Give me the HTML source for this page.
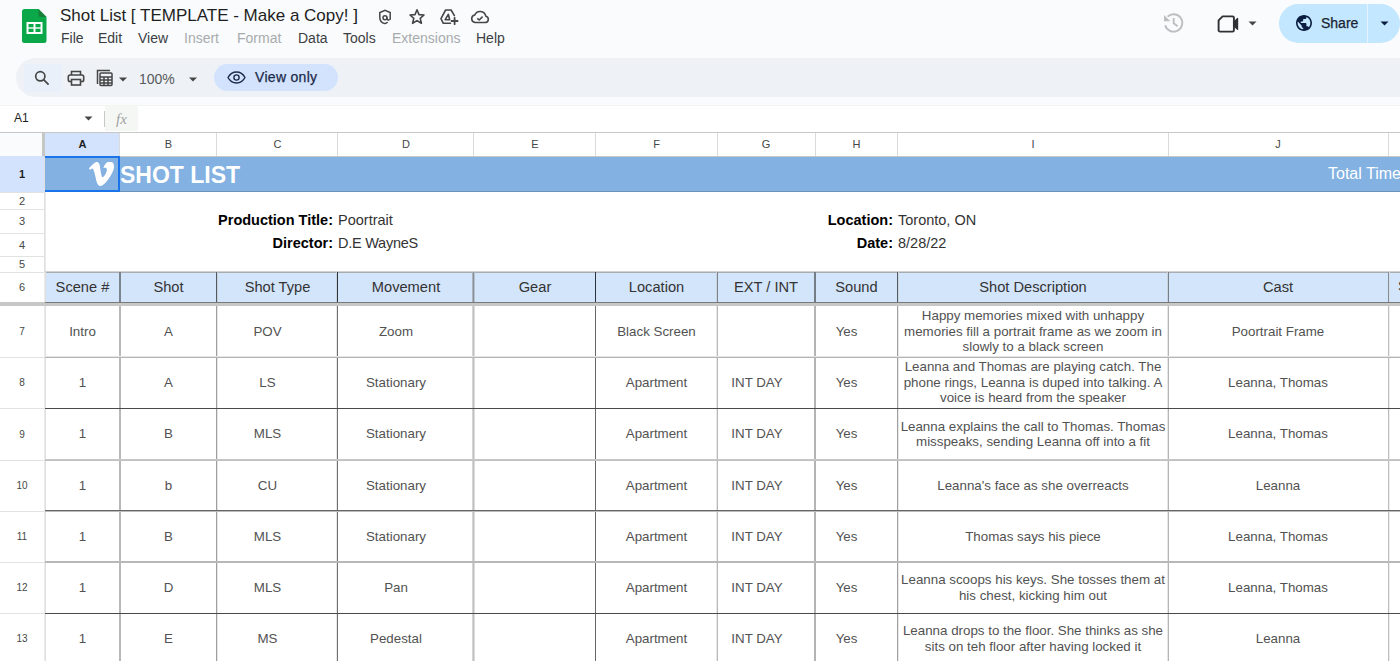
<!DOCTYPE html>
<html><head><meta charset="utf-8">
<style>
*{margin:0;padding:0;box-sizing:border-box}
html,body{width:1400px;height:661px;overflow:hidden;background:#f9fbfd;font-family:"Liberation Sans",sans-serif;position:relative}
.a{position:absolute}
.t{position:absolute;white-space:nowrap;line-height:0}
.menu span{position:absolute;white-space:nowrap;line-height:0;font-size:14px;color:#3c4043}
.menu span.dis{color:#a8abae}
.hl{position:absolute;height:1px}
.vl{position:absolute;width:1px}
.c{position:absolute;display:flex;align-items:center;justify-content:center;text-align:center;font-size:13.33px;color:#525252;line-height:15.5px;white-space:nowrap}
.ch{position:absolute;top:132px;height:24px;display:flex;align-items:center;justify-content:center;font-size:11px;color:#444746}
.rh{position:absolute;left:0;width:44px;display:flex;align-items:center;justify-content:center;font-size:11px;color:#444746}
</style></head><body>

<!-- ===== Title bar ===== -->
<svg class="a" style="left:21.5px;top:9px" width="25" height="34" viewBox="0 0 25 34">
  <path d="M2.5 0H16.5L24.5 8V31.5A2.5 2.5 0 0 1 22 34H2.5A2.5 2.5 0 0 1 0 31.5V2.5A2.5 2.5 0 0 1 2.5 0Z" fill="#0ba84a"/>
  <path d="M16.5 0L24.5 8H18.5A2 2 0 0 1 16.5 6Z" fill="#188038"/>
  <rect x="4.5" y="13" width="16" height="12" fill="#fff"/>
  <rect x="6.5" y="15" width="5" height="3.3" fill="#0ba84a"/>
  <rect x="13.5" y="15" width="5" height="3.3" fill="#0ba84a"/>
  <rect x="6.5" y="19.7" width="5" height="3.3" fill="#0ba84a"/>
  <rect x="13.5" y="19.7" width="5" height="3.3" fill="#0ba84a"/>
</svg>
<div class="t" style="left:60px;top:16px;font-size:17px;color:#1f1f1f">Shot List [ TEMPLATE - Make a Copy! ]</div>

<!-- title icons -->
<svg class="a" style="left:378px;top:9px" width="14" height="16" viewBox="0 0 14 16" fill="none" stroke="#444746" stroke-width="1.5" stroke-linecap="round">
  <path d="M12.2 10.2V3.6L7 1.3L1.8 3.6V8.4C1.8 11.3 4 13.8 7 14.6C7.8 14.4 8.6 14 9.2 13.5"/>
  <circle cx="7" cy="8.8" r="2"/><path d="M9 8.8V9.8C9 10.9 10.3 11.4 11.2 10.7"/>
</svg>
<svg class="a" style="left:408px;top:8px" width="18" height="17" viewBox="0 0 18 17" fill="none" stroke="#444746" stroke-width="1.6" stroke-linejoin="round">
  <path d="M9 1.8L11 6.6L16 7L12.2 10.3L13.4 15.3L9 12.6L4.6 15.3L5.8 10.3L2 7L7 6.6Z"/>
</svg>
<svg class="a" style="left:439px;top:8px" width="20" height="18" viewBox="0 0 20 18" fill="none" stroke="#444746" stroke-width="1.6" stroke-linejoin="round" stroke-linecap="round">
  <path d="M15.4 7.6L12.1 2H6.6L2 10.6L4.3 15.3H11.5"/>
  <path d="M9.3 6.3L6.2 11.7H10.7Z"/>
  <path d="M15.6 9.8V16.2M12.5 13H18.6" stroke-width="1.8"/>
</svg>
<svg class="a" style="left:470px;top:9px" width="20" height="16" viewBox="0 0 20 16" fill="none" stroke="#444746" stroke-width="1.6" stroke-linejoin="round">
  <path d="M5 13.5H15.5A3.2 3.2 0 0 0 15.8 7.2A5.8 5.8 0 0 0 4.8 6A3.8 3.8 0 0 0 5 13.5Z"/>
  <path d="M7.3 9.3L9.2 11L12.6 7.6"/>
</svg>

<div class="menu">
  <span style="left:61px;top:38px">File</span>
  <span style="left:98px;top:38px">Edit</span>
  <span style="left:138px;top:38px">View</span>
  <span class="dis" style="left:184px;top:38px">Insert</span>
  <span class="dis" style="left:237px;top:38px">Format</span>
  <span style="left:298px;top:38px">Data</span>
  <span style="left:343px;top:38px">Tools</span>
  <span class="dis" style="left:392px;top:38px">Extensions</span>
  <span style="left:476px;top:38px">Help</span>
</div>

<!-- right icons -->
<svg class="a" style="left:1162px;top:12px" width="23" height="22" viewBox="0 0 23 22" fill="none" stroke="#bcbec0" stroke-width="1.9">
  <path d="M3.2 13.2A8.7 8.7 0 1 0 5.6 4.6"/><path d="M2 3V9.3H8.3Z" fill="#bcbec0" stroke="none"/><path d="M11.7 6V11.3L15.6 14.3"/>
</svg>
<svg class="a" style="left:1217px;top:14px" width="23" height="19" viewBox="0 0 23 19" fill="none" stroke="#2f3133" stroke-width="1.9" stroke-linejoin="round">
  <path d="M5.6 2.4H15.5A1.4 1.4 0 0 1 16.9 3.8V16.2A1.4 1.4 0 0 1 15.5 17.6H3A1.4 1.4 0 0 1 1.6 16.2V6.4Z"/>
  <path d="M16.9 8L20.6 4.5V15.4L16.9 12Z" fill="#2f3133" stroke-width="1.2"/>
</svg>
<svg class="a" style="left:1248px;top:21px" width="9" height="5" viewBox="0 0 9 5"><path d="M0.5 0.5H8.5L4.5 4.5Z" fill="#444746"/></svg>

<div class="a" style="left:1279px;top:4px;width:121px;height:39px;border-radius:20px;background:#c2e7ff"></div>
<div class="a" style="left:1367px;top:4px;width:1px;height:39px;background:#e4f3ff"></div>
<svg class="a" style="left:1296px;top:15px" width="16" height="16" viewBox="2 2 20 20">
  <path fill="#0b1d40" d="M12 2C6.48 2 2 6.48 2 12s4.48 10 10 10 10-4.48 10-10S17.52 2 12 2zm-1 17.930c-3.95-.49-7-3.850-7-7.930 0-.62.08-1.210.21-1.790L9 15v1c0 1.100.9 2 2 2v1.930zm6.900-2.540c-.26-.81-1-1.390-1.900-1.390h-1v-3c0-.55-.45-1-1-1H8v-2h2c.55 0 1-.45 1-1V7h2c1.100 0 2-.9 2-2v-.41c2.930 1.190 5 4.060 5 7.410 0 2.080-.8 3.970-2.100 5.390z"/>
</svg>
<div class="t" style="left:1321px;top:23px;font-size:14px;-webkit-text-stroke:0.25px #1b2333;color:#1b2333">Share</div>
<svg class="a" style="left:1380px;top:21px" width="9" height="5" viewBox="0 0 9 5"><path d="M0.5 0.5H8.5L4.5 4.5Z" fill="#0b1d40"/></svg>

<!-- ===== Toolbar ===== -->
<div class="a" style="left:16px;top:58px;width:1420px;height:39px;border-radius:20px;background:#eef1f6"></div>
<div class="a" style="left:24px;top:64px;width:38px;height:28px;background:#e9f0fa"></div>
<svg class="a" style="left:34px;top:70px" width="16" height="16" viewBox="0 0 16 16" fill="none" stroke="#444746" stroke-width="1.7">
  <circle cx="6.3" cy="6.3" r="4.6"/><path d="M9.6 9.6L14.6 14.6"/>
</svg>
<svg class="a" style="left:67px;top:70px" width="18" height="16" viewBox="0 0 18 16" fill="none" stroke="#444746" stroke-width="1.6">
  <path d="M4.5 5V1.5H13.5V5"/><rect x="1.3" y="5" width="15.4" height="6.5" rx="1.8"/><rect x="4.5" y="9.5" width="9" height="5.5" fill="#eef1f6"/>
</svg>
<svg class="a" style="left:96px;top:69px" width="18" height="18" viewBox="0 0 18 18" fill="none" stroke="#444746" stroke-width="1.5">
  <path d="M1.5 15V1.5H14"/><rect x="4" y="4" width="12" height="12.5" rx="1"/>
  <path d="M4 8H16M4 11H16M4 14H16M8 8V16.5M12 8V16.5"/>
</svg>
<svg class="a" style="left:119px;top:77px" width="8" height="5" viewBox="0 0 8 5"><path d="M0 0.5H8L4 4.5Z" fill="#444746"/></svg>
<div class="t" style="left:139px;top:79px;font-size:14px;color:#575a5c">100%</div>
<svg class="a" style="left:189px;top:77px" width="8" height="5" viewBox="0 0 8 5"><path d="M0 0.5H8L4 4.5Z" fill="#444746"/></svg>
<div class="a" style="left:214px;top:64px;width:124px;height:27px;border-radius:14px;background:#d3e3fd"></div>
<svg class="a" style="left:227px;top:71px" width="19" height="13" viewBox="0 0 19 13" fill="none" stroke="#1c2a4a" stroke-width="1.4">
  <path d="M1 6.5C3 2.8 6 1 9.5 1S16 2.8 18 6.5C16 10.2 13 12 9.5 12S3 10.2 1 6.5Z"/><circle cx="9.5" cy="6.5" r="2.6"/>
</svg>
<div class="t" style="left:255px;top:77px;font-size:14px;-webkit-text-stroke:0.25px #1c2a4a;letter-spacing:0.3px;color:#1c2a4a">View only</div>

<!-- ===== Formula bar ===== -->
<div class="a" style="left:0;top:105px;width:1400px;height:1px;background:#f2f4f2"></div><div class="a" style="left:0;top:106px;width:1400px;height:26px;background:#fff"></div>
<div class="t" style="left:14px;top:118px;font-size:12px;color:#1f1f1f">A1</div>
<svg class="a" style="left:84px;top:116px" width="9" height="5" viewBox="0 0 9 5"><path d="M0.5 0.5H8.5L4.5 4.5Z" fill="#444746"/></svg>
<div class="a" style="left:104px;top:111px;width:1px;height:16px;background:#c7c7c7"></div>
<div class="a" style="left:105px;top:106px;width:33px;height:25px;background:#f5f7f5"></div>
<div class="t" style="left:116px;top:119px;font-size:15px;font-style:italic;color:#a0a3a3;font-family:'Liberation Serif',serif">fx</div>

<!-- ===== Grid ===== -->
<div class="a" style="left:0;top:132px;width:1400px;height:529px;background:#fff"></div>
<div class="a" style="left:0;top:132px;width:1400px;height:1px;background:#c7c7c7"></div>
<div class="a" style="left:0;top:133px;width:42px;height:23px;background:#f9fbfd"></div>
<div class="a" style="left:42px;top:133px;width:3px;height:23px;background:#c4c7c5"></div>
<div class="a" style="left:44px;top:156px;width:1px;height:505px;background:#dfe1df"></div><div class="a" style="left:45px;top:192px;width:1px;height:80px;background:#e8eae8"></div>
<div class="a" style="left:45px;top:133px;width:75px;height:23px;background:#d3e3fd"></div>
<div class="ch" style="left:45px;width:75px;font-weight:bold;color:#1f1f1f">A</div>
<div class="ch" style="left:120px;width:97px;">B</div>
<div class="a" style="left:119px;top:133px;width:1px;height:23px;background:#dadcda"></div>
<div class="ch" style="left:217px;width:121px;">C</div>
<div class="a" style="left:216px;top:133px;width:1px;height:23px;background:#dadcda"></div>
<div class="ch" style="left:338px;width:136px;">D</div>
<div class="a" style="left:337px;top:133px;width:1px;height:23px;background:#dadcda"></div>
<div class="ch" style="left:474px;width:122px;">E</div>
<div class="a" style="left:473px;top:133px;width:1px;height:23px;background:#dadcda"></div>
<div class="ch" style="left:596px;width:121px;">F</div>
<div class="a" style="left:595px;top:133px;width:1px;height:23px;background:#dadcda"></div>
<div class="ch" style="left:717px;width:98px;">G</div>
<div class="a" style="left:717px;top:133px;width:1px;height:23px;background:#dadcda"></div>
<div class="ch" style="left:815px;width:83px;">H</div>
<div class="a" style="left:815px;top:133px;width:1px;height:23px;background:#dadcda"></div>
<div class="ch" style="left:898px;width:270px;">I</div>
<div class="a" style="left:897px;top:133px;width:1px;height:23px;background:#dadcda"></div>
<div class="ch" style="left:1168px;width:220px;">J</div>
<div class="a" style="left:1168px;top:133px;width:1px;height:23px;background:#dadcda"></div>
<div class="ch" style="left:1388px;width:112px;">K</div>
<div class="a" style="left:1388px;top:133px;width:1px;height:23px;background:#dadcda"></div>
<div class="a" style="left:0;top:156px;width:1400px;height:1px;background:#c7c7c7"></div>
<div class="rh" style="top:156px;height:36px;font-weight:bold;color:#1f1f1f;background:#d3e3fd">1</div>
<div class="rh" style="top:192px;height:17px;">2</div>
<div class="a" style="left:0;top:192px;width:44px;height:1px;background:#e1e3e1"></div>
<div class="rh" style="top:209px;height:24px;">3</div>
<div class="a" style="left:0;top:209px;width:44px;height:1px;background:#e1e3e1"></div>
<div class="rh" style="top:233px;height:23px;">4</div>
<div class="a" style="left:0;top:233px;width:44px;height:1px;background:#e1e3e1"></div>
<div class="rh" style="top:256px;height:16px;">5</div>
<div class="a" style="left:0;top:256px;width:44px;height:1px;background:#e1e3e1"></div>
<div class="rh" style="top:272px;height:30px;">6</div>
<div class="a" style="left:0;top:272px;width:44px;height:1px;background:#e1e3e1"></div>
<div class="rh" style="top:306px;height:51px;font-size:10px">7</div>
<div class="rh" style="top:357px;height:51px;font-size:10px">8</div>
<div class="a" style="left:0;top:357px;width:44px;height:1px;background:#e1e3e1"></div>
<div class="rh" style="top:408px;height:52px;font-size:10px">9</div>
<div class="a" style="left:0;top:408px;width:44px;height:1px;background:#e1e3e1"></div>
<div class="rh" style="top:460px;height:51px;font-size:10px">10</div>
<div class="a" style="left:0;top:460px;width:44px;height:1px;background:#e1e3e1"></div>
<div class="rh" style="top:511px;height:51px;font-size:10px">11</div>
<div class="a" style="left:0;top:511px;width:44px;height:1px;background:#e1e3e1"></div>
<div class="rh" style="top:562px;height:51px;font-size:10px">12</div>
<div class="a" style="left:0;top:562px;width:44px;height:1px;background:#e1e3e1"></div>
<div class="rh" style="top:613px;height:51px;font-size:10px">13</div>
<div class="a" style="left:0;top:613px;width:44px;height:1px;background:#e1e3e1"></div>
<div class="a" style="left:0;top:302px;width:1400px;height:4px;background:#c6c8c6"></div>
<div class="a" style="left:45px;top:157px;width:1355px;height:35px;background:#82b1e2"></div>
<div class="a" style="left:45px;top:191px;width:1355px;height:1px;background:#6f93b8"></div>
<div class="a" style="left:45px;top:156px;width:75px;height:36px;border:2px solid #1a73e8;border-left:none"></div>
<svg class="a" style="left:89px;top:162px" width="25" height="24" viewBox="0 1.9 24 20.5" preserveAspectRatio="none"><path fill="#fff" d="M23.9765 6.4168c-.105 2.338-1.739 5.5429-4.894 9.6088-3.2679 4.247-6.0258 6.3699-8.2898 6.3699-1.409 0-2.578-1.294-3.553-3.881l-1.9179-7.1138c-.719-2.584-1.488-3.878-2.312-3.878-.179 0-.806.378-1.8809 1.132L0 7.2271c1.185-1.044 2.351-2.084 3.501-3.128C5.08 2.701 6.266 1.984 7.055 1.91c1.867-.178 3.016 1.1 3.447 3.838.465 2.953.789 4.789.971 5.507.539 2.45 1.131 3.674 1.776 3.674.502 0 1.256-.796 2.265-2.385 1.004-1.589 1.54-2.797 1.612-3.628.144-1.371-.395-2.061-1.614-2.061-.574 0-1.167.121-1.777.391 1.186-3.868 3.434-5.757 6.762-5.637 2.473.06 3.628 1.664 3.493 4.797l-.013.01z"/></svg>
<div class="t" style="left:120px;top:175px;font-size:23px;font-weight:bold;color:#fff">SHOT LIST</div>
<div class="t" style="left:1328px;top:174px;font-size:16px;color:#fff">Total Time</div>
<div class="t" style="left:0;width:333px;top:220px;text-align:right;font-size:14.5px;font-weight:bold;color:#000">Production Title:</div>
<div class="t" style="left:338px;top:220px;font-size:14.5px;color:#333">Poortrait</div>
<div class="t" style="left:0;width:333px;top:243px;text-align:right;font-size:14.5px;font-weight:bold;color:#000">Director:</div>
<div class="t" style="left:338px;top:243px;font-size:14.5px;letter-spacing:-0.25px;color:#333">D.E WayneS</div>
<div class="t" style="left:0;width:893px;top:220px;text-align:right;font-size:14.5px;font-weight:bold;color:#000">Location:</div>
<div class="t" style="left:898px;top:220px;font-size:14.5px;color:#333">Toronto, ON</div>
<div class="t" style="left:0;width:893px;top:243px;text-align:right;font-size:14.5px;font-weight:bold;color:#000">Date:</div>
<div class="t" style="left:898px;top:243px;font-size:14.5px;color:#333">8/28/22</div>
<div class="a" style="left:45px;top:272px;width:1355px;height:30px;background:#d3e5fb"></div>
<div class="a" style="left:45px;top:271px;width:1355px;height:1px;background:#cfd2d5"></div><div class="a" style="left:45px;top:272px;width:1355px;height:1px;background:#a9adb2"></div>
<div class="c" style="left:45px;top:272px;width:75px;height:30px;padding-top:2px;font-size:14.67px;color:#333">Scene #</div>
<div class="c" style="left:120px;top:272px;width:97px;height:30px;padding-top:2px;font-size:14.67px;color:#333">Shot</div>
<div class="c" style="left:217px;top:272px;width:121px;height:30px;padding-top:2px;font-size:14.67px;color:#333">Shot Type</div>
<div class="c" style="left:338px;top:272px;width:136px;height:30px;padding-top:2px;font-size:14.67px;color:#333">Movement</div>
<div class="c" style="left:474px;top:272px;width:122px;height:30px;padding-top:2px;font-size:14.67px;color:#333">Gear</div>
<div class="c" style="left:596px;top:272px;width:121px;height:30px;padding-top:2px;font-size:14.67px;color:#333">Location</div>
<div class="c" style="left:717px;top:272px;width:98px;height:30px;padding-top:2px;font-size:14.67px;color:#333">EXT / INT</div>
<div class="c" style="left:815px;top:272px;width:83px;height:30px;padding-top:2px;font-size:14.67px;color:#333">Sound</div>
<div class="c" style="left:898px;top:272px;width:270px;height:30px;padding-top:2px;font-size:14.67px;color:#333">Shot Description</div>
<div class="c" style="left:1168px;top:272px;width:220px;height:30px;padding-top:2px;font-size:14.67px;color:#333">Cast</div>
<div class="t" style="left:1398px;top:286px;font-size:14.67px;color:#333">S</div>
<div class="c" style="left:45px;top:306px;width:75px;height:51px;padding-right:0px">Intro</div>
<div class="c" style="left:120px;top:306px;width:97px;height:51px;padding-right:0px">A</div>
<div class="c" style="left:217px;top:306px;width:121px;height:51px;padding-right:20px">POV</div>
<div class="c" style="left:338px;top:306px;width:136px;height:51px;padding-right:20px">Zoom</div>
<div class="c" style="left:596px;top:306px;width:121px;height:51px;padding-right:0px">Black Screen</div>
<div class="c" style="left:815px;top:306px;width:83px;height:51px;padding-right:20px">Yes</div>
<div class="c" style="left:898px;top:306px;width:270px;height:51px;padding-right:0px">Happy memories mixed with unhappy<br>memories fill a portrait frame as we zoom in<br>slowly to a black screen</div>
<div class="c" style="left:1168px;top:306px;width:220px;height:51px;padding-right:0px">Poortrait Frame</div>
<div class="c" style="left:45px;top:357px;width:75px;height:51px;padding-right:0px">1</div>
<div class="c" style="left:120px;top:357px;width:97px;height:51px;padding-right:0px">A</div>
<div class="c" style="left:217px;top:357px;width:121px;height:51px;padding-right:20px">LS</div>
<div class="c" style="left:338px;top:357px;width:136px;height:51px;padding-right:20px">Stationary</div>
<div class="c" style="left:596px;top:357px;width:121px;height:51px;padding-right:0px">Apartment</div>
<div class="c" style="left:717px;top:357px;width:98px;height:51px;padding-right:18px">INT DAY</div>
<div class="c" style="left:815px;top:357px;width:83px;height:51px;padding-right:20px">Yes</div>
<div class="c" style="left:898px;top:357px;width:270px;height:51px;padding-right:0px">Leanna and Thomas are playing catch. The<br>phone rings, Leanna is duped into talking. A<br>voice is heard from the speaker</div>
<div class="c" style="left:1168px;top:357px;width:220px;height:51px;padding-right:0px">Leanna, Thomas</div>
<div class="c" style="left:45px;top:408px;width:75px;height:52px;padding-right:0px">1</div>
<div class="c" style="left:120px;top:408px;width:97px;height:52px;padding-right:0px">B</div>
<div class="c" style="left:217px;top:408px;width:121px;height:52px;padding-right:20px">MLS</div>
<div class="c" style="left:338px;top:408px;width:136px;height:52px;padding-right:20px">Stationary</div>
<div class="c" style="left:596px;top:408px;width:121px;height:52px;padding-right:0px">Apartment</div>
<div class="c" style="left:717px;top:408px;width:98px;height:52px;padding-right:18px">INT DAY</div>
<div class="c" style="left:815px;top:408px;width:83px;height:52px;padding-right:20px">Yes</div>
<div class="c" style="left:898px;top:408px;width:270px;height:52px;padding-right:0px">Leanna explains the call to Thomas. Thomas<br>misspeaks, sending Leanna off into a fit</div>
<div class="c" style="left:1168px;top:408px;width:220px;height:52px;padding-right:0px">Leanna, Thomas</div>
<div class="c" style="left:45px;top:460px;width:75px;height:51px;padding-right:0px">1</div>
<div class="c" style="left:120px;top:460px;width:97px;height:51px;padding-right:0px">b</div>
<div class="c" style="left:217px;top:460px;width:121px;height:51px;padding-right:20px">CU</div>
<div class="c" style="left:338px;top:460px;width:136px;height:51px;padding-right:20px">Stationary</div>
<div class="c" style="left:596px;top:460px;width:121px;height:51px;padding-right:0px">Apartment</div>
<div class="c" style="left:717px;top:460px;width:98px;height:51px;padding-right:18px">INT DAY</div>
<div class="c" style="left:815px;top:460px;width:83px;height:51px;padding-right:20px">Yes</div>
<div class="c" style="left:898px;top:460px;width:270px;height:51px;padding-right:0px">Leanna's face as she overreacts</div>
<div class="c" style="left:1168px;top:460px;width:220px;height:51px;padding-right:0px">Leanna</div>
<div class="c" style="left:45px;top:511px;width:75px;height:51px;padding-right:0px">1</div>
<div class="c" style="left:120px;top:511px;width:97px;height:51px;padding-right:0px">B</div>
<div class="c" style="left:217px;top:511px;width:121px;height:51px;padding-right:20px">MLS</div>
<div class="c" style="left:338px;top:511px;width:136px;height:51px;padding-right:20px">Stationary</div>
<div class="c" style="left:596px;top:511px;width:121px;height:51px;padding-right:0px">Apartment</div>
<div class="c" style="left:717px;top:511px;width:98px;height:51px;padding-right:18px">INT DAY</div>
<div class="c" style="left:815px;top:511px;width:83px;height:51px;padding-right:20px">Yes</div>
<div class="c" style="left:898px;top:511px;width:270px;height:51px;padding-right:0px">Thomas says his piece</div>
<div class="c" style="left:1168px;top:511px;width:220px;height:51px;padding-right:0px">Leanna, Thomas</div>
<div class="c" style="left:45px;top:562px;width:75px;height:51px;padding-right:0px">1</div>
<div class="c" style="left:120px;top:562px;width:97px;height:51px;padding-right:0px">D</div>
<div class="c" style="left:217px;top:562px;width:121px;height:51px;padding-right:20px">MLS</div>
<div class="c" style="left:338px;top:562px;width:136px;height:51px;padding-right:20px">Pan</div>
<div class="c" style="left:596px;top:562px;width:121px;height:51px;padding-right:0px">Apartment</div>
<div class="c" style="left:717px;top:562px;width:98px;height:51px;padding-right:18px">INT DAY</div>
<div class="c" style="left:815px;top:562px;width:83px;height:51px;padding-right:20px">Yes</div>
<div class="c" style="left:898px;top:562px;width:270px;height:51px;padding-right:0px">Leanna scoops his keys. She tosses them at<br>his chest, kicking him out</div>
<div class="c" style="left:1168px;top:562px;width:220px;height:51px;padding-right:0px">Leanna, Thomas</div>
<div class="c" style="left:45px;top:613px;width:75px;height:51px;padding-right:0px">1</div>
<div class="c" style="left:120px;top:613px;width:97px;height:51px;padding-right:0px">E</div>
<div class="c" style="left:217px;top:613px;width:121px;height:51px;padding-right:20px">MS</div>
<div class="c" style="left:338px;top:613px;width:136px;height:51px;padding-right:20px">Pedestal</div>
<div class="c" style="left:596px;top:613px;width:121px;height:51px;padding-right:0px">Apartment</div>
<div class="c" style="left:717px;top:613px;width:98px;height:51px;padding-right:18px">INT DAY</div>
<div class="c" style="left:815px;top:613px;width:83px;height:51px;padding-right:20px">Yes</div>
<div class="c" style="left:898px;top:613px;width:270px;height:51px;padding-right:0px">Leanna drops to the floor. She thinks as she<br>sits on teh floor after having locked it</div>
<div class="c" style="left:1168px;top:613px;width:220px;height:51px;padding-right:0px">Leanna</div>
<div class="a" style="left:45px;top:272px;width:1px;height:30px;background:#e0e0e0"></div>
<div class="a" style="left:45px;top:306px;width:1px;height:355px;background:#e0e0e0"></div>
<div class="a" style="left:44px;top:272px;width:1px;height:30px;background:#eaeaea"></div>
<div class="a" style="left:44px;top:306px;width:1px;height:355px;background:#eaeaea"></div>
<div class="a" style="left:119px;top:272px;width:1px;height:30px;background:#7b838d"></div>
<div class="a" style="left:119px;top:306px;width:1px;height:355px;background:#b8b8b8"></div>
<div class="a" style="left:120px;top:272px;width:1px;height:30px;background:#7b838d"></div>
<div class="a" style="left:120px;top:306px;width:1px;height:355px;background:#b8b8b8"></div>
<div class="a" style="left:216px;top:272px;width:1px;height:30px;background:#525a64"></div>
<div class="a" style="left:216px;top:306px;width:1px;height:355px;background:#a0a0a0"></div>
<div class="a" style="left:217px;top:272px;width:1px;height:30px;background:#c6ced8"></div>
<div class="a" style="left:217px;top:306px;width:1px;height:355px;background:#e4e4e4"></div>
<div class="a" style="left:336px;top:272px;width:1px;height:30px;background:#ccd4de"></div>
<div class="a" style="left:336px;top:306px;width:1px;height:355px;background:#e8e8e8"></div>
<div class="a" style="left:337px;top:272px;width:1px;height:30px;background:#2b333d"></div>
<div class="a" style="left:337px;top:306px;width:1px;height:355px;background:#707070"></div>
<div class="a" style="left:472px;top:272px;width:1px;height:30px;background:#aab2bc"></div>
<div class="a" style="left:472px;top:306px;width:1px;height:355px;background:#d4d4d4"></div>
<div class="a" style="left:473px;top:272px;width:1px;height:30px;background:#88909a"></div>
<div class="a" style="left:473px;top:306px;width:1px;height:355px;background:#c0c0c0"></div>
<div class="a" style="left:474px;top:272px;width:1px;height:30px;background:#b8c0ca"></div>
<div class="a" style="left:474px;top:306px;width:1px;height:355px;background:#dcdcdc"></div>
<div class="a" style="left:595px;top:272px;width:1px;height:30px;background:#2b333d"></div>
<div class="a" style="left:595px;top:306px;width:1px;height:355px;background:#686868"></div>
<div class="a" style="left:716px;top:272px;width:1px;height:30px;background:#ccd4de"></div>
<div class="a" style="left:716px;top:306px;width:1px;height:355px;background:#e8e8e8"></div>
<div class="a" style="left:717px;top:272px;width:1px;height:30px;background:#7b838d"></div>
<div class="a" style="left:717px;top:306px;width:1px;height:355px;background:#b8b8b8"></div>
<div class="a" style="left:814px;top:272px;width:1px;height:30px;background:#747c86"></div>
<div class="a" style="left:814px;top:306px;width:1px;height:355px;background:#b4b4b4"></div>
<div class="a" style="left:815px;top:272px;width:1px;height:30px;background:#747c86"></div>
<div class="a" style="left:815px;top:306px;width:1px;height:355px;background:#b4b4b4"></div>
<div class="a" style="left:897px;top:272px;width:1px;height:30px;background:#525a64"></div>
<div class="a" style="left:897px;top:306px;width:1px;height:355px;background:#a0a0a0"></div>
<div class="a" style="left:898px;top:272px;width:1px;height:30px;background:#ccd4de"></div>
<div class="a" style="left:898px;top:306px;width:1px;height:355px;background:#e8e8e8"></div>
<div class="a" style="left:1167px;top:272px;width:1px;height:30px;background:#c9d1db"></div>
<div class="a" style="left:1167px;top:306px;width:1px;height:355px;background:#e6e6e6"></div>
<div class="a" style="left:1168px;top:272px;width:1px;height:30px;background:#767e88"></div>
<div class="a" style="left:1168px;top:306px;width:1px;height:355px;background:#b5b5b5"></div>
<div class="a" style="left:1388px;top:272px;width:1px;height:30px;background:#838b95"></div>
<div class="a" style="left:1388px;top:306px;width:1px;height:355px;background:#bdbdbd"></div>
<div class="a" style="left:1389px;top:272px;width:1px;height:30px;background:#d7dfe9"></div>
<div class="a" style="left:1389px;top:306px;width:1px;height:355px;background:#eeeeee"></div>
<div class="a" style="left:45px;top:302px;width:1355px;height:1px;background:#7a7a7a"></div>
<div class="a" style="left:45px;top:356px;width:1355px;height:1px;background:#e6e6e6"></div>
<div class="a" style="left:45px;top:357px;width:1355px;height:1px;background:#b4b4b4"></div>
<div class="a" style="left:45px;top:408px;width:1355px;height:1px;background:#4a4a4a"></div>
<div class="a" style="left:45px;top:459px;width:1355px;height:1px;background:#c8c8c8"></div>
<div class="a" style="left:45px;top:460px;width:1355px;height:1px;background:#c0c0c0"></div>
<div class="a" style="left:45px;top:510px;width:1355px;height:1px;background:#666666"></div>
<div class="a" style="left:45px;top:511px;width:1355px;height:1px;background:#bbbbbb"></div>
<div class="a" style="left:45px;top:561px;width:1355px;height:1px;background:#b8b8b8"></div>
<div class="a" style="left:45px;top:562px;width:1355px;height:1px;background:#b8b8b8"></div>
<div class="a" style="left:45px;top:613px;width:1355px;height:1px;background:#4a4a4a"></div>
</body></html>
